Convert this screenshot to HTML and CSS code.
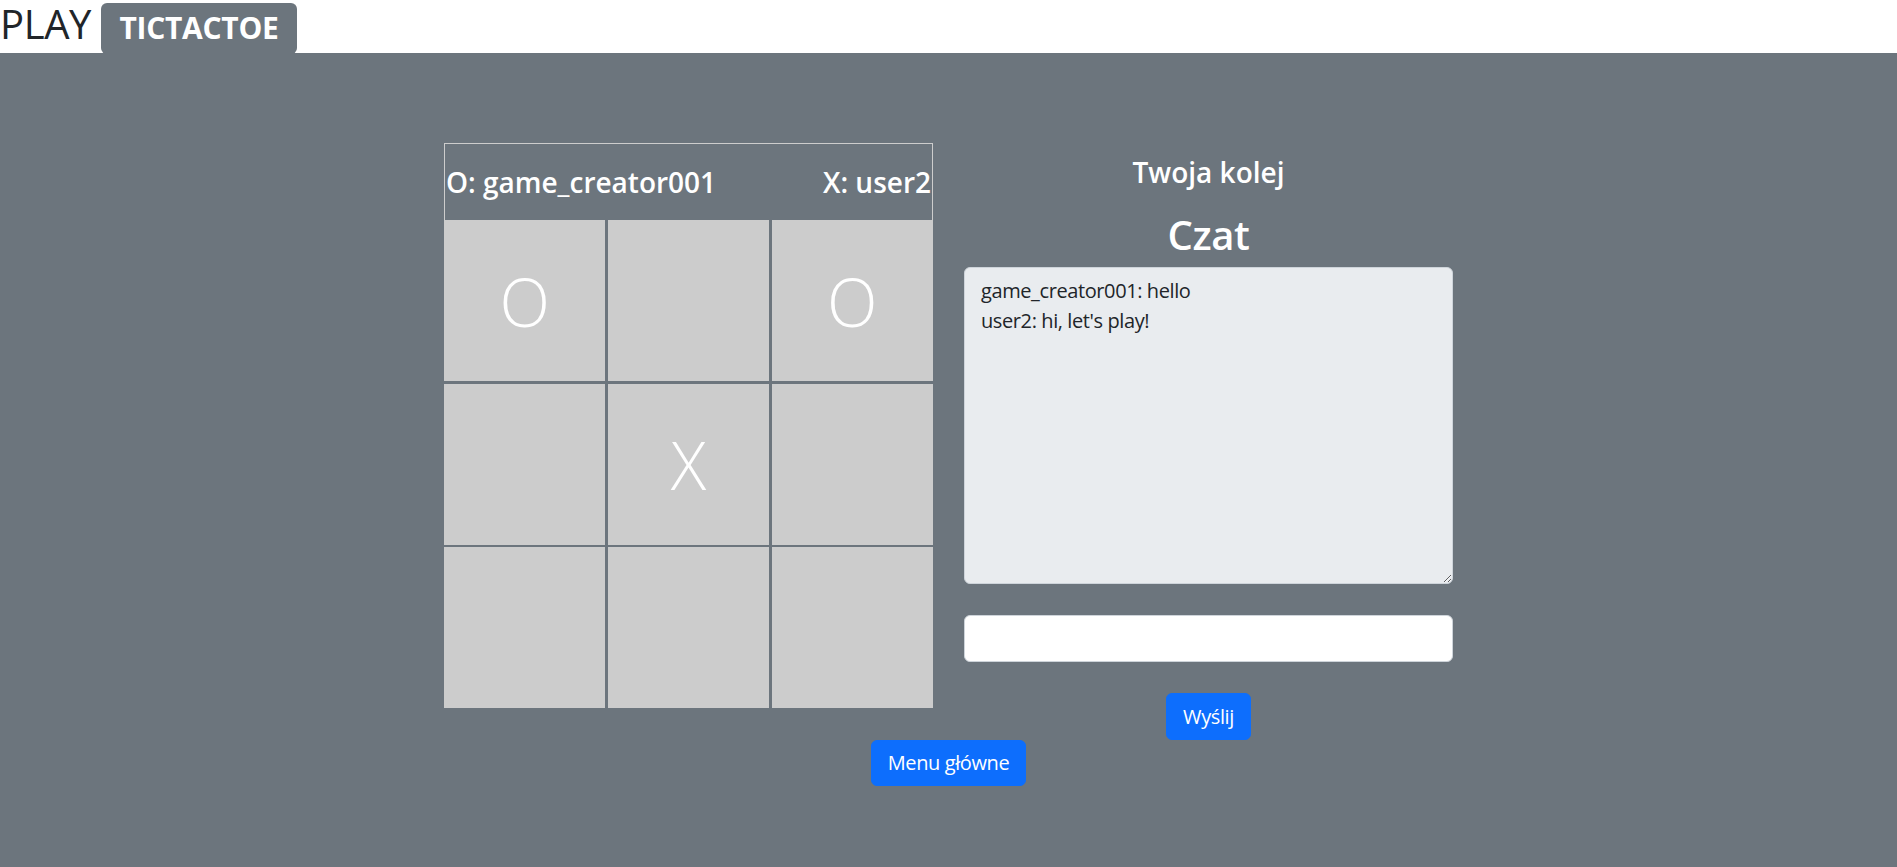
FILE: index.html
```html
<!DOCTYPE html>
<html lang="pl">
<head>
<meta charset="utf-8">
<title>PLAY TICTACTOE</title>
<link rel="stylesheet" href="styles.css">
</head>
<body>
<header class="topbar">
  <h1 class="brand">PLAY <span class="badge">TICTACTOE</span></h1>
</header>
<main class="page">
  <div class="game-row">
    <section class="board">
      <div class="players">
        <h3 class="player">O: game_creator001</h3>
        <h3 class="player">X: user2</h3>
      </div>
      <div class="grid">
        <div class="cell">O</div>
        <div class="cell"></div>
        <div class="cell">O</div>
        <div class="cell"></div>
        <div class="cell">X</div>
        <div class="cell"></div>
        <div class="cell"></div>
        <div class="cell"></div>
        <div class="cell"></div>
      </div>
    </section>
    <section class="chat">
      <h3 class="turn">Twoja kolej</h3>
      <h1 class="chat-title">Czat</h1>
      <textarea class="chat-log" readonly>game_creator001: hello
user2: hi, let's play!</textarea>
      <input class="chat-input" type="text">
      <button class="btn" type="button">Wyślij</button>
    </section>
  </div>
  <div class="menu-row">
    <button class="btn" type="button">Menu główne</button>
  </div>
</main>
</body>
</html>
```

FILE: styles.css
```css
html, body {
  margin: 0;
  padding: 0;
}

body {
  font-family: "Open Sans", "Noto Sans", sans-serif;
  background: #fff;
  color: #212529;
}

.topbar {
  height: 53px;
  background: #fff;
}

.brand {
  margin: 0;
  font-size: 40px;
  font-weight: 400;
  line-height: 1.2;
  letter-spacing: -0.01em;
  color: #212529;
  white-space: nowrap;
}

.badge {
  display: inline-block;
  font-size: 30px;
  font-weight: 700;
  line-height: 1;
  letter-spacing: -0.01em;
  padding: 10.5px 18.5px;
  color: #fff;
  background: #6c757d;
  border-radius: 6px;
  vertical-align: baseline;
}

.page {
  background: #6c757d;
  min-height: calc(100vh - 53px);
  padding-top: 90px;
  box-sizing: border-box;
}

.game-row {
  display: flex;
  justify-content: center;
  align-items: flex-start;
  gap: 31px;
}

.board {
  width: 489px;
}

.players {
  height: 77px;
  box-sizing: border-box;
  border: 1px solid #cdcdcd;
  border-bottom: 0;
  display: flex;
  justify-content: space-between;
  align-items: center;
  padding: 2px 1px 0;
}

.player {
  margin: 0;
  font-size: 28px;
  font-weight: 600;
  line-height: 1.2;
  color: #fff;
}

.grid {
  display: grid;
  grid-template-columns: repeat(3, 1fr);
  grid-template-rows: repeat(3, 1fr);
  gap: 2.5px;
  height: 488px;
}

.cell {
  background: #cccccc;
  display: flex;
  align-items: center;
  justify-content: center;
  color: #fff;
  font-size: 66px;
  font-weight: 300;
}

.chat {
  width: 489px;
  padding-top: 13px;
  display: flex;
  flex-direction: column;
  align-items: center;
  text-align: center;
  color: #fff;
}

.turn {
  margin: 0 0 21px;
  font-size: 28px;
  font-weight: 600;
  line-height: 1.2;
}

.chat-title {
  margin: 0 0 8.5px;
  font-size: 40px;
  font-weight: 600;
  line-height: 1.2;
  letter-spacing: -0.01em;
}

.chat-log {
  display: block;
  width: 100%;
  height: 317px;
  box-sizing: border-box;
  margin: 0 0 31px;
  padding: 8px 16px;
  font-family: "Open Sans", "Noto Sans", sans-serif;
  font-size: 20px;
  line-height: 1.5;
  letter-spacing: -0.02em;
  color: #212529;
  background: #e9ecef;
  border: 1px solid #ced4da;
  border-radius: 6px;
  resize: vertical;
  outline: none;
}

.chat-input {
  display: block;
  width: 100%;
  height: 47px;
  box-sizing: border-box;
  margin: 0 0 31px;
  padding: 8px 16px;
  font-family: "Open Sans", "Noto Sans", sans-serif;
  font-size: 20px;
  background: #fff;
  border: 1px solid #ced4da;
  border-radius: 6px;
  outline: none;
}

.btn {
  font-family: "Open Sans", "Noto Sans", sans-serif;
  font-size: 20px;
  line-height: 1.5;
  letter-spacing: -0.02em;
  padding: 7.5px 16px;
  color: #fff;
  background: #0d6efd;
  border: 1px solid #0d6efd;
  border-radius: 6px;
  cursor: pointer;
}

.menu-row {
  display: flex;
  justify-content: center;
}

.menu-row .btn {
  padding: 7px 16px;
}
```
